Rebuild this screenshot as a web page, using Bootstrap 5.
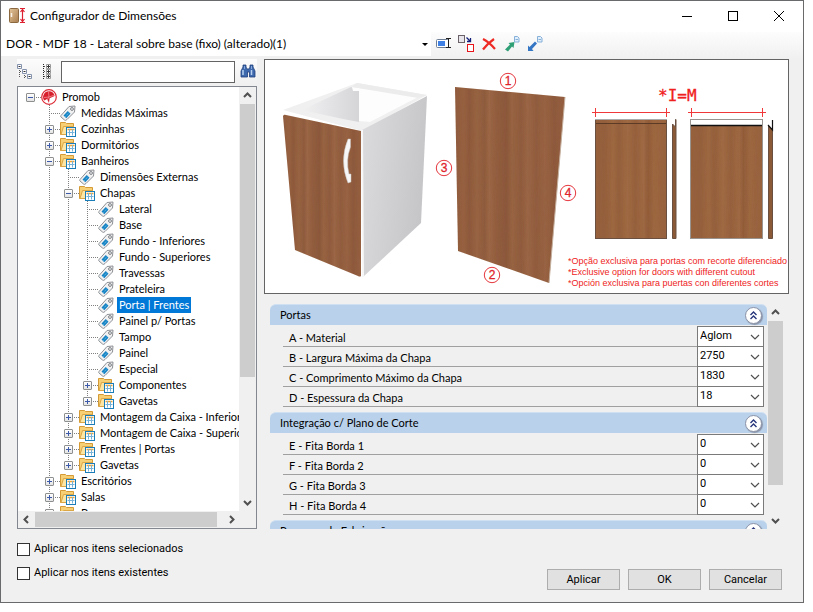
<!DOCTYPE html>
<html lang="pt-BR">
<head>
<meta charset="utf-8">
<meta name="viewport" content="width=device-width, initial-scale=1">
<title>Configurador de Dimensões</title>
<link href="https://cdn.jsdelivr.net/npm/bootstrap@5.3.0/dist/css/bootstrap.min.css" rel="stylesheet">
<style>
  body { font: 11px/16px Roboto, "Liberation Sans", sans-serif; color: #000; background: #fff; padding: 0 9px 9px 0; }
  .dialog { background: #f0f0f0; border: 1px solid #696a6c; }
  .segoe { font-family: Lato, "Open Sans", sans-serif; font-size: 12px; }
  .titlebar { height: 31px; background: #fff; padding: 0 1px 2px 8px; }
  .titlebar h1 { font-size: 12px; line-height: 16px; }
  .win-btn { width: 46px; height: 29px; border: 0; background: none; padding: 0; }
  .toolstrip { height: 27px; background: linear-gradient(#fdfdfd, #f0f0f0); gap: 5px; padding: 0 0 4px 3px; }
  .tool { border: 0; background: none; padding: 0; width: 18px; height: 18px; line-height: 0; }
  .item-pick { flex: 0 1 430px; min-width: 0; height: 24px; border: 0; border-radius: 0; appearance: none; padding: 0 14px 0 5px; color: #000; text-overflow: ellipsis;
    background: #fff url("data:image/svg+xml,%3Csvg xmlns='http://www.w3.org/2000/svg' width='6' height='3'%3E%3Cpath d='M0 0h6L3 3z'/%3E%3C/svg%3E") no-repeat right 3px center; }
  .work { padding: 0 14px 0 16px; gap: 7px; min-height: 0; }
  .side { flex: 0 0 240px; width: 240px; min-width: 0; min-height: 0; }
  .searchbar { height: 26px; background: linear-gradient(#fcfcfc, #f0f0f0); gap: 4px; }
  .search-box { width: 0; min-width: 0; height: 22px; border: 1px solid #646464; padding: 0 4px; background: #fff; }
  .tree-frame { border: 1px solid #828790; background: #fff; min-height: 0; margin-top: 2px; }
  .tree-view { width: 0; min-height: 0; min-width: 0; overflow: hidden; padding: 2px 0 0 3px; }
  .tree-view, .prop-list { font-family: Lato, Roboto, sans-serif; }
  .tree-view ul { list-style: none; margin: 0; padding: 0; white-space: nowrap; }
  .tree-view ul ul { margin-left: 19px; }
  .tree-view ul ul > li { background: repeating-linear-gradient(#808080 0 1px, transparent 1px 2px) 9px 0 / 1px 100% no-repeat; }
  .tree-view ul ul ul > li:last-child { background-size: 1px 8px; }
  .node { height: 16px; display: flex; align-items: center; background: repeating-linear-gradient(90deg, #808080 0 1px, transparent 1px 2px) 9px 8px / 11px 1px no-repeat; }
  .twist { width: 9px; height: 9px; margin: 0 5px; padding: 0; border: 1px solid #8e8f8f; border-radius: 1px; flex: none; line-height: 0;
    background: linear-gradient(#3c5aa8, #3c5aa8) 1px 3px / 5px 1px no-repeat, linear-gradient(#fff, #e4e4e4); }
  .twist.plus { background: linear-gradient(#3c5aa8, #3c5aa8) 1px 3px / 5px 1px no-repeat, linear-gradient(#3c5aa8, #3c5aa8) 3px 1px / 1px 5px no-repeat, linear-gradient(#fff, #e4e4e4); }
  .no-twist { width: 19px; flex: none; }
  .node svg { width: 16px; height: 16px; flex: none; margin-left: 1px; }
  .caption { padding: 0 2px; margin-left: 3px; }
  .caption.picked { background: #0078d7; color: #fff; }
  .sb { background: #f0f0f0; flex: none; display: flex; align-items: center; }
  .sb-v { width: 17px; flex-direction: column; }
  .sb-h { height: 17px; }
  .sb button { width: 17px; height: 17px; border: 0; padding: 0; background: none; flex: none; line-height: 0; }
  .thumb { background: #cdcdcd; }
  .sb-v .thumb { width: 15px; }
  .sb-h .thumb { height: 15px; }
  .preview { border: 1px solid #646464; background: #fff; }
  .preview svg { display: block; width: 100%; height: auto; }
  .props { min-height: 0; margin: 10px 5px 0 6px; }
  .prop-list { min-width: 0; overflow: hidden; }
  .group { margin-bottom: 5px; }
  .group-head { height: 21px; background: #b9d1ea; border-radius: 6px 6px 0 0; padding: 0 5px 0 10px; border-top: 1px solid #cfe0f2; }
  .group-head h2 { font-size: 11px; line-height: 16px; }
  .fold { width: 17px; height: 17px; border-radius: 50%; border: 1px solid #8a93a8; background: #fff; padding: 0; line-height: 0; box-shadow: 1px 1px 1px #8a93a8; }
  .group-body { padding: 1px 3px 0 13px; }
  .field { display: flex; align-items: flex-end; }
  .field label { height: 20px; padding: 3px 0 0 6px; border-bottom: 1px solid #a0a0a0; line-height: 16px; }
  .field select { font-family: Roboto, sans-serif; width: 67px; height: 20px; border: 1px solid #7a7a7a; border-top: 0; border-radius: 0; appearance: none; padding: 0 16px 2px 2px; color: #000; line-height: 16px;
    background: #fff url("data:image/svg+xml,%3Csvg xmlns='http://www.w3.org/2000/svg' width='10' height='6'%3E%3Cpath d='M1 1l4 4 4-4' fill='none' stroke='%23505050' stroke-width='1.2'/%3E%3C/svg%3E") no-repeat right 3px center; }
  .field:first-child select { height: 21px; border-top: 1px solid #7a7a7a; }
  .foot { min-height: 73px; padding: 12px 21px 12px 16px; }
  .tick { gap: 4px; height: 16px; }
  .tick input { appearance: none; width: 13px; height: 13px; border: 1px solid #333; background: #fff; margin: 0; }
  .push { width: 73px; height: 21px; border: 1px solid #adadad; border-radius: 0; background: #e1e1e1; padding: 0; font-size: 11px; line-height: 16px; color: #000; }
</style>
<script src="https://cdn.jsdelivr.net/npm/bootstrap@5.3.0/dist/js/bootstrap.bundle.min.js"></script>
</head>
<body class="vh-100 overflow-hidden">

<svg class="d-none" aria-hidden="true">
  <symbol id="tag" viewBox="0 0 16 16">
    <path d="M1 10.500 9 1.500 15 1 14.500 7 7 14.500Q5.500 16 4.500 15L1 12Q.3 11.300 1 10.500z" fill="#f1f1f2" stroke="#8d9095"/>
    <path d="M3.500 10.500 7.800 6 10.500 8.700 6.300 13.200z" fill="#1583c4"/>
    <path d="M5.500 11.500 9 7.500" stroke="#7fc4ea" stroke-dasharray="1 1"/>
    <circle cx="12" cy="4" r="1.400" fill="#fff" stroke="#777b80"/>
  </symbol>
  <symbol id="folder" viewBox="0 0 16 16">
    <path d="M.5 13.500V1.500h5l1 1h7v11z" fill="#f7cf74" stroke="#d49a35"/>
    <path d="M1 13.500 3.500 5.500h10v8z" fill="#fde6a4" stroke="#dba646"/>
    <rect x="6.500" y="6.500" width="9" height="9" fill="#fff" stroke="#1a7db8"/>
    <path d="M7.500 8.500h7" stroke="#f0a532" stroke-width="1.500"/>
    <path d="M9.500 8v6.500M12.500 8v6.500M7.500 11.500h7" stroke="#77b2d8"/>
  </symbol>
  <symbol id="promob" viewBox="0 0 16 16">
    <circle cx="8" cy="8" r="7.300" fill="#fff" stroke="#dc2b36" stroke-width="1.200"/>
    <path d="M8 2.200A5.800 5.800 0 0 0 3.300 11.500L6 10 8 14 8.600 9.200 13.600 7A5.800 5.800 0 0 0 8 2.200z" fill="#d81f2c"/>
    <path d="M7.500 2.500 8 8l5.500-2M8 8 3 8.500M8 8l-2 3" stroke="#f49a9f" stroke-width=".7" fill="none"/>
  </symbol>
  <symbol id="up" viewBox="0 0 17 17"><path d="M5 10 8.500 6.500 12 10" fill="none" stroke="#505050" stroke-width="2"/></symbol>
  <symbol id="down" viewBox="0 0 17 17"><path d="M5 7 8.500 10.500 12 7" fill="none" stroke="#505050" stroke-width="2"/></symbol>
  <symbol id="left" viewBox="0 0 17 17"><path d="M10 5 6.500 8.500 10 12" fill="none" stroke="#505050" stroke-width="2"/></symbol>
  <symbol id="right" viewBox="0 0 17 17"><path d="M7 5 10.500 8.500 7 12" fill="none" stroke="#505050" stroke-width="2"/></symbol>
  <symbol id="chevrons" viewBox="0 0 15 15"><path d="M4.500 7 7.500 4l3 3M4.500 11 7.500 8l3 3" fill="none" stroke="#27357a" stroke-width="1.400"/></symbol>
</svg>

<main class="dialog h-100 d-flex flex-column">
  <header class="titlebar d-flex align-items-center segoe">
    <svg width="17" height="17" viewBox="0 0 17 17" aria-hidden="true">
      <defs><linearGradient id="doorIcon" x2="1" y2="1"><stop stop-color="#e2c49a"/><stop offset="1" stop-color="#a97e4f"/></linearGradient></defs>
      <rect x=".5" y="1.500" width="9" height="14" rx="1" fill="url(#doorIcon)" stroke="#8b6840"/>
      <path d="M2.500 6v4" stroke="#f8f2e8" stroke-width="1.500"/>
      <path d="M11 1.500h5M11 15.500h5M13.500 2v13M11.500 5l2-2.500 2 2.500M11.500 12l2 2.500 2-2.500" fill="none" stroke="#dc2030" stroke-width="1.200"/>
    </svg>
    <h1 class="mb-0 ms-1 fw-normal flex-fill">Configurador de Dimensões</h1>
    <button class="win-btn" aria-label="Minimizar"><svg width="10" height="10"><path d="M0 5.500h10" stroke="#000"/></svg></button>
    <button class="win-btn" aria-label="Maximizar"><svg width="10" height="10"><rect x=".5" y=".5" width="9" height="9" fill="none" stroke="#000"/></svg></button>
    <button class="win-btn" aria-label="Fechar"><svg width="10" height="10"><path d="M0 0 10 10M10 0 0 10" stroke="#000"/></svg></button>
  </header>

  <div class="d-flex">
    <select class="item-pick segoe" aria-label="Item"><option>DOR - MDF 18 - Lateral sobre base (fixo) (alterado)(1)</option></select>
    <div class="toolstrip d-flex align-items-center flex-fill" role="toolbar">
      <button class="tool" aria-label="Renomear"><svg width="17" height="17"><rect x="1.500" y="4.500" width="12" height="8" rx="1" fill="#fff" stroke="#6f7f95"/><rect x="3" y="6" width="7" height="5" fill="#3f80e4"/><path d="M11 3.500h5M11 12.500h5M13.500 4v8" stroke="#222"/></svg></button>
      <button class="tool" aria-label="Substituir"><svg width="18" height="18"><rect x="1.500" y=".5" width="6" height="7" fill="#e8e6ea" stroke="#6b6168"/><rect x="10.500" y="9.500" width="6" height="7" fill="#fff" stroke="#e8141c"/><path d="M9.500 2.500 13 6M13.500 3v3.500H10" fill="none" stroke="#14207a" stroke-width="1.300"/></svg></button>
      <button class="tool" aria-label="Excluir"><svg width="16" height="16"><path d="M2 3Q8 6 14 13M13 3Q6 8 2 13.500" fill="none" stroke="#ee2a25" stroke-width="2.200"/></svg></button>
      <button class="tool" aria-label="Exportar"><svg width="18" height="18"><path d="M2 14.500 7 9.500 5.500 8 11.500 7 10.500 13 9 11.500 5 16.500z" fill="#2f9f76"/><path d="M11.500 1.500h3l1.500 1.500v4h-4.500z" fill="#e0effb" stroke="#86b0d8"/><path d="M12.500 4.500h2.500" stroke="#86b0d8"/></svg></button>
      <button class="tool" aria-label="Importar"><svg width="18" height="18"><path d="M2 16V10.500L3.500 12 9 6.500 11 8.500 6 14 7.500 16z" fill="#3576c4"/><path d="M11.500 1.500h3l1.500 1.500v4h-4.500z" fill="#e0effb" stroke="#86b0d8"/><path d="M12.500 4.500h2.500" stroke="#86b0d8"/></svg></button>
    </div>
  </div>

  <div class="work d-flex flex-fill">
    <aside class="side d-flex flex-column">
      <div class="searchbar d-flex align-items-center" role="toolbar">
        <button class="tool" aria-label="Recolher"><svg width="18" height="18"><path d="M2.500 5v10M3 8.500h4M7.500 10v6M8 13.500h3" stroke="#555" stroke-dasharray="1 1"/><g fill="#fff" stroke="#8592ae"><path d="M.5 1.500h4v4h-4zM5.500 6.500h4v4h-4zM10.500 11.500h4v4h-4z"/></g><path d="M1.500 3.500h2M6.500 8.500h2M11.500 13.500h2" stroke="#333"/></svg></button>
        <button class="tool" aria-label="Expandir"><svg width="18" height="18"><path d="M4.500 1v15" stroke="#222" stroke-dasharray="1 1"/><path d="M5 3.500h3M5 8.500h3M5 13.500h3" stroke="#555" stroke-dasharray="1 1"/><g fill="#fff" stroke="#999"><path d="M7.500 1.500h4v4h-4zM7.500 6.500h4v4h-4zM7.500 11.500h4v4h-4z"/></g><path d="M8 3.500h3M8 8.500h3M8 13.500h3M9.500 2v3M9.500 7v3M9.500 12v3" stroke="#333"/></svg></button>
        <input class="search-box flex-fill" type="text" aria-label="Pesquisar">
        <button class="tool" aria-label="Localizar"><svg width="17" height="17"><path d="M3 2h3v2l1 2h2l1-2V2h3v2l2 4v6H9.500V9h-2v5H1V8l2-4z" fill="#3f69ad" stroke="#1e3f7c" stroke-width=".8"/><path d="M3 7v5M11.500 7v5" stroke="#b8d0f0" stroke-width="1.500"/><path d="M4.500 3v3M11.500 3v3" stroke="#86a8dc"/></svg></button>
      </div>

      <div class="tree-frame flex-fill d-flex flex-column">
        <div class="d-flex flex-fill overflow-hidden">
          <nav class="tree-view flex-fill" aria-label="Dimensões">
            <ul>
              <li><div class="node"><button class="twist" aria-label="Recolher"></button><svg><use href="#promob"/></svg><span class="caption">Promob</span></div>
                <ul>
                  <li><div class="node"><span class="no-twist"></span><svg><use href="#tag"/></svg><span class="caption">Medidas Máximas</span></div></li>
                  <li><div class="node"><button class="twist plus" aria-label="Expandir"></button><svg><use href="#folder"/></svg><span class="caption">Cozinhas</span></div></li>
                  <li><div class="node"><button class="twist plus" aria-label="Expandir"></button><svg><use href="#folder"/></svg><span class="caption">Dormitórios</span></div></li>
                  <li><div class="node"><button class="twist" aria-label="Recolher"></button><svg><use href="#folder"/></svg><span class="caption">Banheiros</span></div>
                    <ul>
                      <li><div class="node"><span class="no-twist"></span><svg><use href="#tag"/></svg><span class="caption">Dimensões Externas</span></div></li>
                      <li><div class="node"><button class="twist" aria-label="Recolher"></button><svg><use href="#folder"/></svg><span class="caption">Chapas</span></div>
                        <ul>
                          <li><div class="node"><span class="no-twist"></span><svg><use href="#tag"/></svg><span class="caption">Lateral</span></div></li>
                          <li><div class="node"><span class="no-twist"></span><svg><use href="#tag"/></svg><span class="caption">Base</span></div></li>
                          <li><div class="node"><span class="no-twist"></span><svg><use href="#tag"/></svg><span class="caption">Fundo - Inferiores</span></div></li>
                          <li><div class="node"><span class="no-twist"></span><svg><use href="#tag"/></svg><span class="caption">Fundo - Superiores</span></div></li>
                          <li><div class="node"><span class="no-twist"></span><svg><use href="#tag"/></svg><span class="caption">Travessas</span></div></li>
                          <li><div class="node"><span class="no-twist"></span><svg><use href="#tag"/></svg><span class="caption">Prateleira</span></div></li>
                          <li><div class="node"><span class="no-twist"></span><svg><use href="#tag"/></svg><span class="caption picked">Porta | Frentes</span></div></li>
                          <li><div class="node"><span class="no-twist"></span><svg><use href="#tag"/></svg><span class="caption">Painel p/ Portas</span></div></li>
                          <li><div class="node"><span class="no-twist"></span><svg><use href="#tag"/></svg><span class="caption">Tampo</span></div></li>
                          <li><div class="node"><span class="no-twist"></span><svg><use href="#tag"/></svg><span class="caption">Painel</span></div></li>
                          <li><div class="node"><span class="no-twist"></span><svg><use href="#tag"/></svg><span class="caption">Especial</span></div></li>
                          <li><div class="node"><button class="twist plus" aria-label="Expandir"></button><svg><use href="#folder"/></svg><span class="caption">Componentes</span></div></li>
                          <li><div class="node"><button class="twist plus" aria-label="Expandir"></button><svg><use href="#folder"/></svg><span class="caption">Gavetas</span></div></li>
                        </ul>
                      </li>
                      <li><div class="node"><button class="twist plus" aria-label="Expandir"></button><svg><use href="#folder"/></svg><span class="caption">Montagem da Caixa - Inferior</span></div></li>
                      <li><div class="node"><button class="twist plus" aria-label="Expandir"></button><svg><use href="#folder"/></svg><span class="caption">Montagem de Caixa - Superior</span></div></li>
                      <li><div class="node"><button class="twist plus" aria-label="Expandir"></button><svg><use href="#folder"/></svg><span class="caption">Frentes | Portas</span></div></li>
                      <li><div class="node"><button class="twist plus" aria-label="Expandir"></button><svg><use href="#folder"/></svg><span class="caption">Gavetas</span></div></li>
                    </ul>
                  </li>
                  <li><div class="node"><button class="twist plus" aria-label="Expandir"></button><svg><use href="#folder"/></svg><span class="caption">Escritórios</span></div></li>
                  <li><div class="node"><button class="twist plus" aria-label="Expandir"></button><svg><use href="#folder"/></svg><span class="caption">Salas</span></div></li>
                  <li><div class="node"><button class="twist plus" aria-label="Expandir"></button><svg><use href="#folder"/></svg><span class="caption">Bares</span></div></li>
                </ul>
              </li>
            </ul>
          </nav>
          <div class="sb sb-v">
            <button aria-label="Rolar para cima"><svg width="17" height="17"><use href="#up"/></svg></button>
            <div class="thumb" style="flex:70"></div><div style="flex:30"></div>
            <button aria-label="Rolar para baixo"><svg width="17" height="17"><use href="#down"/></svg></button>
          </div>
        </div>
        <div class="sb sb-h">
          <button aria-label="Rolar para a esquerda"><svg width="17" height="17"><use href="#left"/></svg></button>
          <div class="thumb" style="flex:97"></div><div style="flex:3"></div>
          <button class="me-3" aria-label="Rolar para a direita"><svg width="17" height="17"><use href="#right"/></svg></button>
        </div>
      </div>
    </aside>

    <section class="d-flex flex-column flex-fill overflow-hidden">
      <div class="preview mt-0">
        <svg viewBox="0 0 523 233" role="img" aria-label="Porta e medidas">
          <defs>
            <linearGradient id="wood">
              <stop stop-color="#905b3e"/><stop offset=".08" stop-color="#976142"/><stop offset=".13" stop-color="#8e593c"/><stop offset=".2" stop-color="#986443"/><stop offset=".27" stop-color="#8f5b3e"/><stop offset=".31" stop-color="#9c6746"/><stop offset=".38" stop-color="#925d3f"/><stop offset=".47" stop-color="#8c583b"/><stop offset=".52" stop-color="#986443"/><stop offset=".6" stop-color="#905b3e"/><stop offset=".66" stop-color="#9b6646"/><stop offset=".74" stop-color="#915c3f"/><stop offset=".82" stop-color="#996344"/><stop offset=".9" stop-color="#8e593c"/><stop offset="1" stop-color="#966042"/>
            </linearGradient>
            <linearGradient id="woodLight">
              <stop stop-color="#98623e"/><stop offset=".12" stop-color="#945f3c"/><stop offset=".25" stop-color="#9e6842"/><stop offset=".33" stop-color="#95603c"/><stop offset=".45" stop-color="#a06a44"/><stop offset=".56" stop-color="#97613d"/><stop offset=".68" stop-color="#9f6944"/><stop offset=".74" stop-color="#925c39"/><stop offset=".82" stop-color="#9d6741"/><stop offset="1" stop-color="#98623e"/>
            </linearGradient>
            <linearGradient id="sidePanel" x2="1" y2=".3"><stop stop-color="#dcdcde"/><stop offset="1" stop-color="#c6c6c9"/></linearGradient>
            <linearGradient id="innerWall"><stop stop-color="#f1f1f2"/><stop offset="1" stop-color="#d5d5d8"/></linearGradient>
            <filter id="grain" x="0" y="0" width="1" height="1">
              <feTurbulence type="fractalNoise" baseFrequency=".35 .015" numOctaves="2" seed="4"/>
              <feColorMatrix values="0 0 0 0 .25  0 0 0 0 .12  0 0 0 0 .05  .35 0 0 0 -.12"/>
              <feComposite in2="SourceGraphic" operator="in" result="g"/>
              <feMerge><feMergeNode in="SourceGraphic"/><feMergeNode in="g"/></feMerge>
            </filter>
          </defs>

          <path d="M18 50 92 23 162 35 97 71z" fill="#f0f0f1"/>
          <path d="M37 50 86 27 94 31V62L78 59z" fill="url(#innerWall)"/>
          <path d="M87 27 153 37 105 62 94 61V31H88z" fill="#fdfdfd"/>
          <path d="M92 23 162 35 153 38 87 27z" fill="#ececed"/>
          <path d="M97 70 162 36 156 163 98 217z" fill="url(#sidePanel)"/>
          <path d="M97 70 98 217" stroke="#f7f7f7" stroke-width="2"/>
          <path d="M18 56Q19 54 21 55L96 71V216Q95 217 93 216L30 190z" fill="url(#wood)" filter="url(#grain)"/>
          <path d="M83 79h2.500v8Q80.500 100 84 114h2v8l-3 1Q74 101 83 79z" fill="#f7f7f8" stroke="#c5c0bf" stroke-width=".5"/>

          <path d="M190 27 300 37 284 223 193 191z" fill="url(#wood)" filter="url(#grain)"/>
          <path d="M300 37 284 223" stroke="#c5b09f" fill="none"/>

          <g fill="none" stroke="#e5353b">
            <circle cx="243" cy="21" r="7.700"/><circle cx="227" cy="215" r="7.700"/><circle cx="179" cy="108" r="7.700"/><circle cx="303" cy="133" r="7.700"/>
          </g>
          <g fill="#e0242c" stroke="#e0242c" stroke-width=".3" font-family="Liberation Sans, sans-serif" font-size="12" text-anchor="middle">
            <text x="243" y="25">1</text><text x="227" y="219">2</text><text x="179" y="112">3</text><text x="303" y="137">4</text>
          </g>

          <rect x="330.500" y="59.500" width="71" height="119" fill="url(#woodLight)" filter="url(#grain)"/>
          <rect x="330.500" y="59.500" width="71" height="119" fill="none" stroke="#695040"/>
          <path d="M330 59.500h72" stroke="#aaa"/><path d="M331 63.500h70" stroke="#5b3b26"/>
          <path d="M407.500 178.500V64l3 3V59.500h.500v119z" fill="#8c5937" stroke="#695040"/>
          <rect x="426.500" y="59.500" width="70" height="119" fill="#fff"/>
          <rect x="426" y="65" width="71" height="113" fill="url(#woodLight)" filter="url(#grain)"/>
          <rect x="425.500" y="59.500" width="72" height="119" fill="none" stroke="#9a9491"/>
          <path d="M426 65.500h71" stroke="#111" stroke-width="1.500"/>
          <path d="M503.500 178.500V66l4 4v108.500z" fill="#8c5937" stroke="#695040"/>
          <path d="M503 65l4.500 5V60" fill="none" stroke="#111" stroke-width="1.200"/>

          <path d="M327 52.500h78M330.500 48v9M401.500 48v9M423 52.500h78M426.500 48v9M497.500 48v9" stroke="#f0373a"/>
          <text x="393" y="41" fill="#f02020" stroke="#f02020" stroke-width=".3" font-family="DejaVu Sans Mono, monospace" font-size="16">*I=M</text>
          <g fill="#ee2222" font-family="Liberation Sans, sans-serif" font-size="9">
            <text x="303" y="204">*Opção exclusiva para portas com recorte diferenciado</text>
            <text x="303" y="215">*Exclusive option for doors with different cutout</text>
            <text x="303" y="226">*Opción exclusiva para puertas con diferentes cortes</text>
          </g>
        </svg>
      </div>

      <div class="props d-flex flex-fill">
        <div class="prop-list flex-fill">
          <section class="group">
            <div class="group-head d-flex align-items-center justify-content-between"><h2 class="mb-0 fw-normal">Portas</h2><button class="fold" aria-label="Recolher Portas"><svg width="15" height="15"><use href="#chevrons"/></svg></button></div>
            <div class="group-body">
              <div class="field"><label class="flex-fill" for="fa">A - Material</label><select id="fa"><option>Aglom</option></select></div>
              <div class="field"><label class="flex-fill" for="fb">B - Largura Máxima da Chapa</label><select id="fb"><option>2750</option></select></div>
              <div class="field"><label class="flex-fill" for="fc">C - Comprimento Máximo da Chapa</label><select id="fc"><option>1830</option></select></div>
              <div class="field"><label class="flex-fill" for="fd">D - Espessura da Chapa</label><select id="fd"><option>18</option></select></div>
            </div>
          </section>
          <section class="group">
            <div class="group-head d-flex align-items-center justify-content-between"><h2 class="mb-0 fw-normal">Integração c/ Plano de Corte</h2><button class="fold" aria-label="Recolher Integração"><svg width="15" height="15"><use href="#chevrons"/></svg></button></div>
            <div class="group-body">
              <div class="field"><label class="flex-fill" for="fe">E - Fita Borda 1</label><select id="fe"><option>0</option></select></div>
              <div class="field"><label class="flex-fill" for="ff">F - Fita Borda 2</label><select id="ff"><option>0</option></select></div>
              <div class="field"><label class="flex-fill" for="fg">G - Fita Borda 3</label><select id="fg"><option>0</option></select></div>
              <div class="field"><label class="flex-fill" for="fh">H - Fita Borda 4</label><select id="fh"><option>0</option></select></div>
            </div>
          </section>
          <section class="group">
            <div class="group-head d-flex align-items-center justify-content-between"><h2 class="mb-0 fw-normal">Processo de Fabricação</h2><button class="fold" aria-label="Recolher Processo"><svg width="15" height="15"><use href="#chevrons"/></svg></button></div>
          </section>
        </div>
        <div class="sb sb-v">
          <button aria-label="Rolar para cima"><svg width="17" height="17"><use href="#up"/></svg></button>
          <div class="thumb" style="flex:86"></div><div style="flex:14"></div>
          <button aria-label="Rolar para baixo"><svg width="17" height="17"><use href="#down"/></svg></button>
        </div>
      </div>
    </section>
  </div>

  <footer class="foot d-flex justify-content-between align-items-end">
    <div class="d-flex flex-column gap-2 align-self-start">
      <label class="tick d-flex align-items-center"><input type="checkbox">Aplicar nos itens selecionados</label>
      <label class="tick d-flex align-items-center"><input type="checkbox">Aplicar nos itens existentes</label>
    </div>
    <div class="d-flex gap-2">
      <button class="push">Aplicar</button>
      <button class="push">OK</button>
      <button class="push">Cancelar</button>
    </div>
  </footer>
</main>
</body>
</html>
